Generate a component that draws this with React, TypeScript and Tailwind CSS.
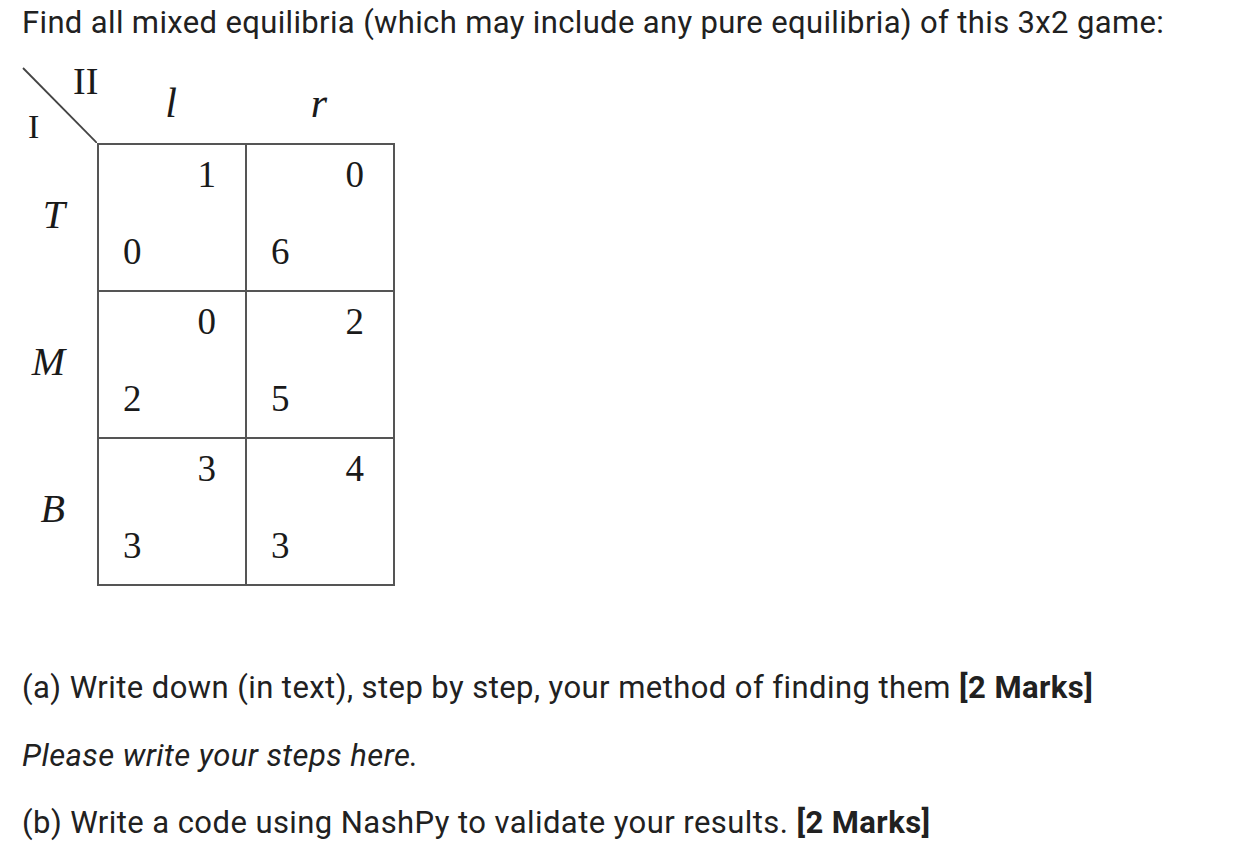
import React from "react";

const rows = [
  { label: "T", cells: [{ a: "0", b: "1" }, { a: "6", b: "0" }] },
  { label: "M", cells: [{ a: "2", b: "0" }, { a: "5", b: "2" }] },
  { label: "B", cells: [{ a: "3", b: "3" }, { a: "3", b: "4" }] },
];

const serif = "font-['Liberation_Serif','Times_New_Roman',serif]";

export default function App() {
  return (
    <div className="min-h-[866px] w-[1238px] bg-white px-[22px] font-['Roboto',sans-serif] text-[#212121]">
      <p className="pt-[3px] text-[31px] leading-[40px] tracking-[0.36px]">
        Find all mixed equilibria (which may include any pure equilibria) of this 3x2 game:
      </p>

      <div className="mt-[12px] ml-[-22px] text-[#1a1a1a]">
        {/* header row */}
        <div className="flex h-[88px]">
          <div className={`relative h-[88px] w-[97px] ${serif}`}>
            <svg className="absolute left-0 top-0" width="97" height="88" viewBox="0 0 97 88">
              <line x1="23" y1="13" x2="97" y2="88" stroke="#444" strokeWidth="1.8" />
            </svg>
            <span className="absolute left-[73px] top-[7px] text-[38px] leading-none">II</span>
            <span className="absolute left-[28px] top-[55px] text-[34px] leading-none">I</span>
          </div>
          <div className={`w-[148px] pt-[27px] text-center text-[42px] italic leading-none ${serif}`}>l</div>
          <div className={`w-[148px] pt-[27px] text-center text-[42px] italic leading-none ${serif}`}>r</div>
        </div>

        {/* rows */}
        <div className="flex">
          <div className="flex w-[97px] flex-col">
            {rows.map((r) => (
              <div
                key={r.label}
                className={`flex h-[147px] items-center justify-end pr-[32px] pb-[4px] text-[40px] italic leading-none ${serif}`}
              >
                {r.label}
              </div>
            ))}
          </div>
          <div className="grid grid-cols-[148px_148px] border-l-2 border-t-2 border-[#555]">
            {rows.map((r) =>
              r.cells.map((c, i) => (
                <div
                  key={r.label + i}
                  className={`flex h-[147px] flex-col justify-between border-b-2 border-r-2 border-[#555] pt-[11px] pb-[20px] text-[37px] leading-none ${serif}`}
                >
                  <span className="self-end pr-[29px]">{c.b}</span>
                  <span className="self-start pl-[24px]">{c.a}</span>
                </div>
              ))
            )}
          </div>
        </div>
      </div>

      <p className="mt-[82px] text-[31px] leading-[40px] tracking-[0.43px]">
        (a) Write down (in text), step by step, your method of finding them <b className="font-bold">[2 Marks]</b>
      </p>
      <p className="mt-[28px] text-[31px] italic leading-[40px] tracking-[0.43px]">Please write your steps here.</p>
      <p className="mt-[27px] text-[31px] leading-[40px] tracking-[0.43px]">
        (b) Write a code using NashPy to validate your results. <b className="font-bold">[2 Marks]</b>
      </p>
    </div>
  );
}
